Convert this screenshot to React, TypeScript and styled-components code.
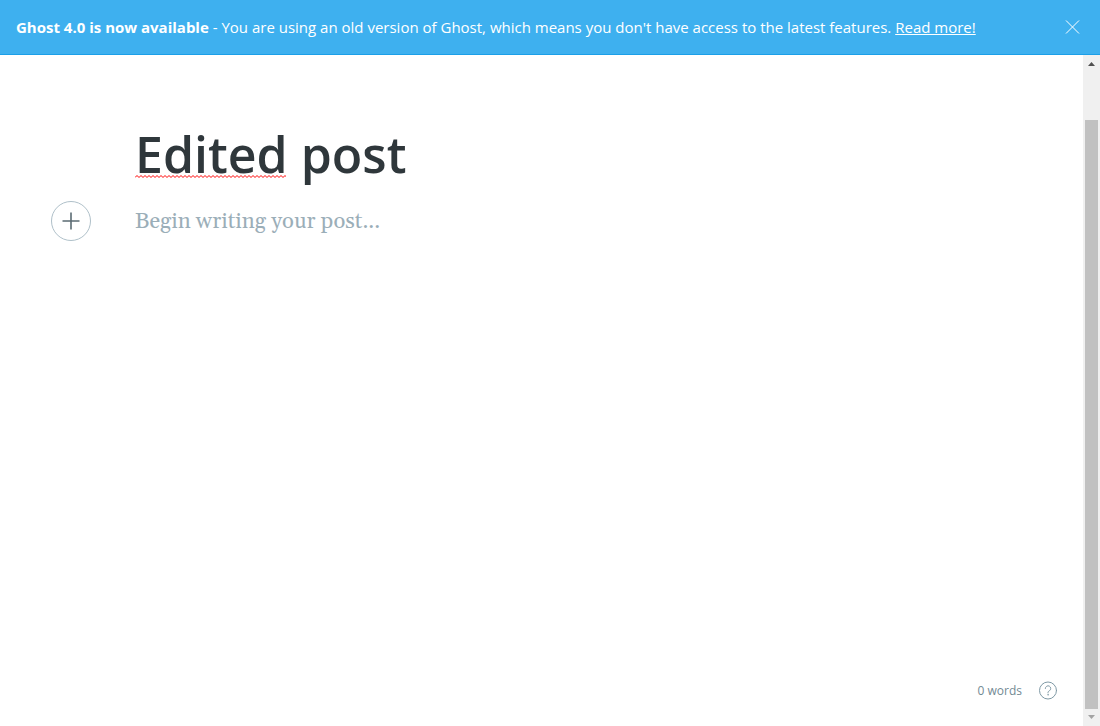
import React, { useState } from "react";
import styled, { createGlobalStyle } from "styled-components";

const sans = `"Open Sans", "Noto Sans", sans-serif`;
const serif = `Gelasio, Georgia, "Liberation Serif", serif`;

const GlobalStyle = createGlobalStyle`
  *, *::before, *::after { box-sizing: border-box; }
  body { margin: 0; background: #fff; font-family: ${sans}; }
  button, input, textarea { font: inherit; }
`;

const Page = styled.div`
  display: flex;
  flex-direction: column;
  height: 100vh;
`;

const Banner = styled.aside`
  display: flex;
  align-items: center;
  justify-content: space-between;
  padding: 16px 20px 16px 16px;
  background: #3eb0ef;
  border-bottom: 1px solid #1b9fe8;
  color: #fff;
  font-size: 15px;
  line-height: 22px;
`;

const BannerText = styled.p`
  margin: 0;
`;

const BannerLink = styled.a`
  color: inherit;
  text-decoration: underline;
`;

const IconButton = styled.button`
  display: flex;
  flex: none;
  padding: 0;
  border: 0;
  background: none;
  color: inherit;
  cursor: pointer;
`;

const Body = styled.div`
  display: flex;
  flex: 1;
  min-height: 0;
`;

const Editor = styled.main`
  display: flex;
  flex: 1;
  flex-direction: column;
  min-width: 0;
  padding: 63px 25px 23px 51px;
`;

const TitleField = styled.div`
  position: relative;
  margin-left: 84px;
`;

const TitleInput = styled.input`
  display: block;
  width: 100%;
  height: 72px;
  padding: 0;
  border: 0;
  outline: 0;
  background: none;
  color: #2f373b;
  font-size: 50px;
  font-weight: 600;
  line-height: 72px;
`;

const SpellingMark = styled.svg`
  position: absolute;
  left: 0;
  top: 57px;
`;

const ContentRow = styled.div`
  display: flex;
  flex: 1;
  align-items: flex-start;
  gap: 44px;
  padding-top: 11px;
`;

const AddButton = styled(IconButton)`
  align-items: center;
  justify-content: center;
  width: 40px;
  height: 40px;
  border: 1px solid #afc0c9;
  border-radius: 50%;
  color: #5b6b73;
`;

const ContentInput = styled.textarea`
  flex: 1;
  height: 100%;
  padding: 5px 0;
  border: 0;
  outline: 0;
  resize: none;
  background: none;
  color: #2f373b;
  font-family: ${serif};
  font-size: 22px;
  line-height: 32px;

  &::placeholder {
    color: #9baeb8;
    opacity: 1;
  }
`;

const StatusBar = styled.footer`
  display: flex;
  align-items: center;
  justify-content: flex-end;
  gap: 16px;
  height: 24px;
  color: #738a94;
  font-size: 12px;
  line-height: 24px;
`;

const HelpLink = styled.a`
  display: flex;
  color: #809aa6;
`;

const Scrollbar = styled.div`
  display: flex;
  flex: none;
  flex-direction: column;
  align-items: center;
  width: 17px;
  background: #f0f0f0;
`;

const ScrollArrow = styled.svg`
  flex: none;
`;

const ScrollTrack = styled.div`
  display: flex;
  flex: 1;
  width: 13px;
  padding-top: 48px;
`;

const ScrollThumb = styled.div`
  flex: 1;
  background: #c1c1c1;
`;

const wave = "M0 2.5" + " l2 -2 l2 2".repeat(38);

export default function App() {
  const [title, setTitle] = useState("Edited post");
  const [content, setContent] = useState("");
  const words = content.split(/\s+/).filter(Boolean).length;

  return (
    <Page>
      <GlobalStyle />
      <Banner>
        <BannerText>
          <strong>Ghost 4.0 is now available</strong> - You are using an old version of Ghost, which
          means you don't have access to the latest features. <BannerLink href="#upgrade">Read more!</BannerLink>
        </BannerText>
        <IconButton type="button" aria-label="Dismiss">
          <svg width="15" height="15" viewBox="0 0 15 15" fill="none" stroke="currentColor">
            <path d="M1 .5 14 13.500M14 .5 1 13.500" />
          </svg>
        </IconButton>
      </Banner>
      <Body>
        <Editor>
          <TitleField>
            <TitleInput
              aria-label="Post title"
              spellCheck={false}
              value={title}
              onChange={(e) => setTitle(e.target.value)}
            />
            {title.startsWith("Edited") && (
              <SpellingMark width="151" height="3" viewBox="0 0 151 3" fill="none" stroke="#f00" aria-hidden="true">
                <path d={wave} />
              </SpellingMark>
            )}
          </TitleField>
          <ContentRow>
            <AddButton type="button" aria-label="Add a card">
              <svg width="18" height="18" viewBox="0 0 18 18" fill="none" stroke="currentColor" strokeWidth="1.6">
                <path d="M9 0.5v17M0.5 9h17" />
              </svg>
            </AddButton>
            <ContentInput
              aria-label="Post content"
              placeholder="Begin writing your post..."
              value={content}
              onChange={(e) => setContent(e.target.value)}
            />
          </ContentRow>
          <StatusBar>
            <span>{words} words</span>
            <HelpLink href="#help" aria-label="Help">
              <svg width="20" height="20" viewBox="0 0 20 20" fill="none" stroke="currentColor" strokeLinecap="round">
                <circle cx="10" cy="9.5" r="8.5" />
                <path d="M7.300 7.500a2.700 2.700 0 1 1 4.100 2.300c-.9.5-1.400.9-1.400 1.700v.4" />
                <circle cx="10" cy="13.800" r=".4" fill="currentColor" strokeWidth=".6" />
              </svg>
            </HelpLink>
          </StatusBar>
        </Editor>
        <Scrollbar aria-hidden="true">
          <ScrollArrow width="17" height="17" viewBox="0 0 17 17" fill="#505050">
            <path d="M5 11 8.5 7 12 11z" />
          </ScrollArrow>
          <ScrollTrack>
            <ScrollThumb />
          </ScrollTrack>
          <ScrollArrow width="17" height="17" viewBox="0 0 17 17" fill="#a3a3a3">
            <path d="M5 6 8.5 10 12 6z" />
          </ScrollArrow>
        </Scrollbar>
      </Body>
    </Page>
  );
}
